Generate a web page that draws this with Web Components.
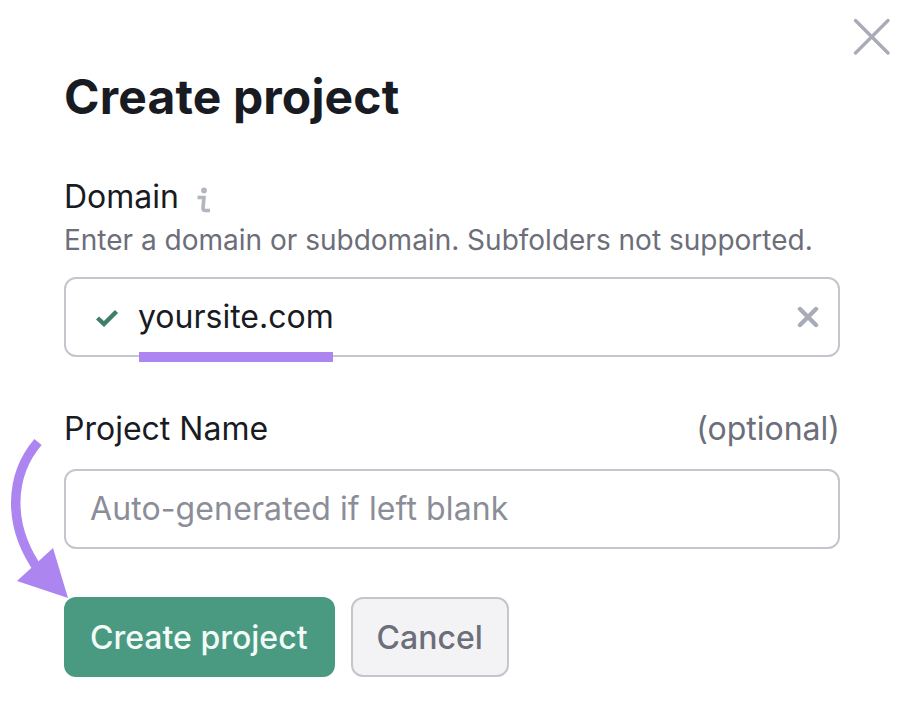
<!DOCTYPE html>
<html>
<head>
<meta charset="utf-8">
<title>Create project</title>
<style>
    html, body { margin: 0; background: #fff; }
    body { font-family: Inter, "Liberation Sans", sans-serif; }
</style>
</head>
<body>
<project-dialog>
    <form-field label="Domain" hint="Enter a domain or subdomain. Subfolders not supported." info>
        <text-input value="yoursite.com" valid clearable></text-input>
    </form-field>
    <form-field label="Project Name" aside="(optional)">
        <text-input placeholder="Auto-generated if left blank"></text-input>
    </form-field>
    <app-button slot="actions" kind="primary">Create project</app-button>
    <app-button slot="actions">Cancel</app-button>
</project-dialog>

<script>
class ProjectDialog extends HTMLElement {
    constructor() {
        super();
        this.attachShadow({ mode: "open" });
        this.shadowRoot.innerHTML = `
            <style>
                :host {
                    display: block;
                    position: relative;
                    width: 908px;
                    height: 710px;
                    box-sizing: border-box;
                    padding: 68px 68px 0 64px;
                    overflow: hidden;
                }
                h1 {
                    margin: 0 0 53px;
                    font-size: 48px;
                    line-height: 58px;
                    font-weight: 700;
                    letter-spacing: 0.15px;
                    color: #191b23;
                }
                .fields { display: flex; flex-direction: column; gap: 54px; }
                .actions { display: flex; gap: 16px; margin-top: 48px; }
                .close { position: absolute; left: 853px; top: 18px; }
                .arrow { position: absolute; left: 0; top: 430px; }
            </style>
            <svg class="close" width="38" height="38" viewBox="0 0 38 38" fill="none" stroke="#a9abb6" stroke-width="3.4" stroke-linecap="round">
                <path d="M2.5 2.5 L35 35 M35 2.5 L2.5 35"/>
            </svg>
            <h1>Create project</h1>
            <div class="fields"><slot></slot></div>
            <div class="actions"><slot name="actions"></slot></div>
            <svg class="arrow" width="80" height="180" viewBox="0 0 80 180" fill="none">
                <path d="M38 12 C 10 45, 6 95, 40 142" stroke="#ad85f0" stroke-width="9.5"/>
                <path d="M17 151 L53 118 L68 168 Z" fill="#ad85f0"/>
            </svg>
        `;
    }
}

class FormField extends HTMLElement {
    constructor() {
        super();
        this.attachShadow({ mode: "open" });
    }

    connectedCallback() {
        const hint = this.getAttribute("hint");
        const aside = this.getAttribute("aside");
        this.shadowRoot.innerHTML = `
            <style>
                :host { display: block; }
                .top { display: flex; align-items: center; justify-content: space-between; height: 36px; margin-bottom: 22px; }
                :host([hint]) .top { margin-bottom: 9px; }
                .label { display: flex; align-items: center; gap: 17px; font-size: 32px; line-height: 36px; color: #191b23; }
                .aside { font-size: 32px; line-height: 36px; color: #6c6e79; }
                .hint { font-size: 28px; line-height: 32px; color: #6c6e79; margin-bottom: 21px; white-space: nowrap; }
                svg { display: block; margin-top: 6px; }
            </style>
            <div class="top">
                <div class="label">
                    <span>${this.getAttribute("label")}</span>
                    ${this.hasAttribute("info") ? `<svg width="15" height="26" viewBox="0 0 15 26" fill="none">
                        <circle cx="8" cy="3.5" r="2.9" fill="#b3b5bf"/>
                        <path d="M1.5 10.5 H8 L7 21 Q7 23.5 9.5 23.5 H14" stroke="#b3b5bf" stroke-width="3.6"/>
                    </svg>` : ""}
                </div>
                ${aside ? `<span class="aside">${aside}</span>` : ""}
            </div>
            ${hint ? `<div class="hint">${hint}</div>` : ""}
            <slot></slot>
        `;
    }
}

class TextInput extends HTMLElement {
    constructor() {
        super();
        this.attachShadow({ mode: "open" });
    }

    connectedCallback() {
        const value = this.getAttribute("value");
        const placeholder = this.getAttribute("placeholder");
        this.shadowRoot.innerHTML = `
            <style>
                :host {
                    display: flex;
                    align-items: center;
                    position: relative;
                    box-sizing: border-box;
                    height: 80px;
                    padding: 0 19px 0 24px;
                    border: 2px solid #c4c6cd;
                    border-radius: 12px;
                    background: #fff;
                    font-size: 32px;
                    line-height: 38px;
                }
                .check { margin: 1px 19px 0 5px; flex: none; }
                .value { position: relative; color: #191b23; }
                .value::after {
                    content: "";
                    position: absolute;
                    left: 1px;
                    right: 1px;
                    bottom: -26px;
                    height: 10px;
                    background: #ad85f0;
                }
                .placeholder { color: #8b8d98; letter-spacing: 0.11px; }
                .clear { margin-left: auto; flex: none; }
            </style>
            ${this.hasAttribute("valid") ? `<svg class="check" width="24" height="20" viewBox="0 0 24 20" fill="none">
                <path d="M2.5 10 L9 16 L21.5 3.5" stroke="#3f7e6c" stroke-width="4.4"/>
            </svg>` : ""}
            ${value ? `<span class="value">${value}</span>` : ""}
            ${placeholder ? `<span class="placeholder">${placeholder}</span>` : ""}
            ${this.hasAttribute("clearable") ? `<svg class="clear" width="22" height="22" viewBox="0 0 22 22" fill="none">
                <path d="M3 3 L19 19 M19 3 L3 19" stroke="#a9abb6" stroke-width="4.4" stroke-linecap="round"/>
            </svg>` : ""}
        `;
    }
}

class AppButton extends HTMLElement {
    constructor() {
        super();
        this.attachShadow({ mode: "open" });
        this.shadowRoot.innerHTML = `
            <style>
                :host {
                    display: inline-flex;
                    align-items: center;
                    box-sizing: border-box;
                    height: 80px;
                    padding: 0 24px;
                    border: 2px solid #c4c6cd;
                    border-radius: 12px;
                    background: #f3f3f6;
                    color: #6c6e79;
                    font-size: 32px;
                    font-weight: 500;
                }
                :host([kind="primary"]) {
                    border: 0;
                    padding: 0 27px 0 26px;
                    background: #4a9a81;
                    color: #f2fbf8;
                }
            </style>
            <slot></slot>
        `;
    }
}

customElements.define("project-dialog", ProjectDialog);
customElements.define("form-field", FormField);
customElements.define("text-input", TextInput);
customElements.define("app-button", AppButton);
</script>
</body>
</html>
